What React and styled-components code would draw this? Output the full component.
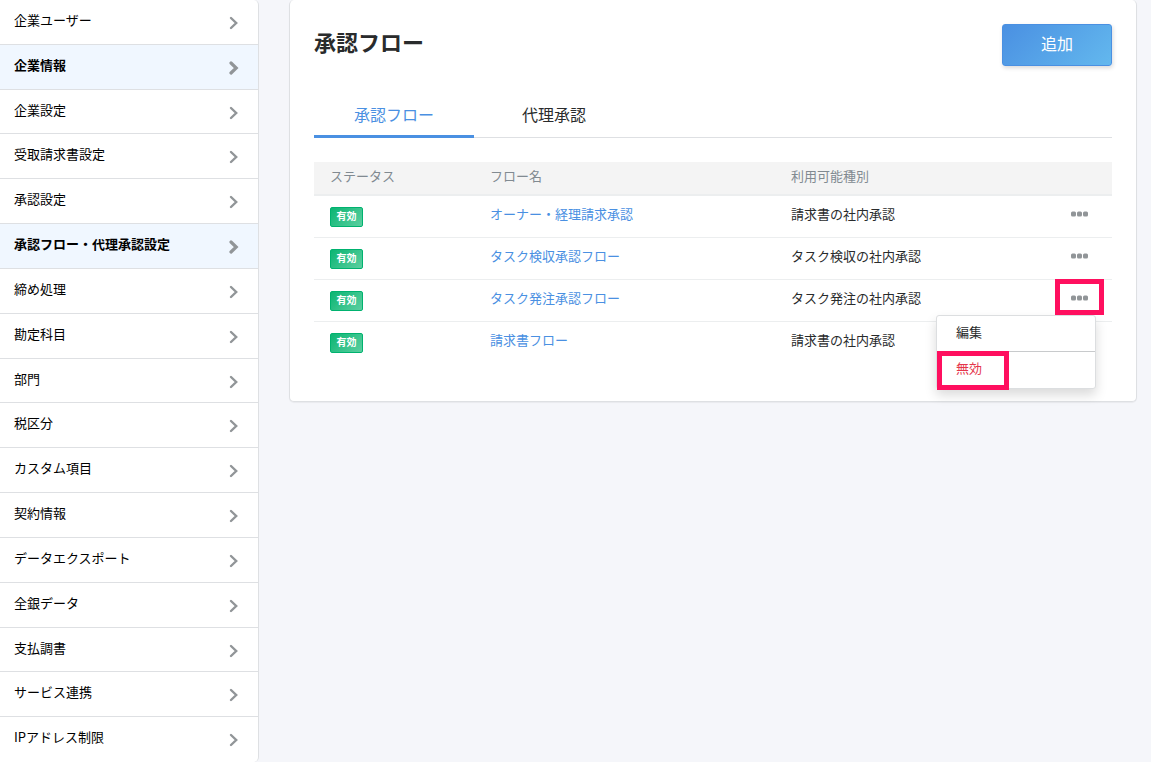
import React from "react";
import styled, { createGlobalStyle, css } from "styled-components";

const GlobalStyle = createGlobalStyle`
  *, *::before, *::after { box-sizing: border-box; }
  body {
    margin: 0;
    background: #f5f6fa;
    color: #292b2c;
    font-family: "Noto Sans CJK JP", "Noto Sans", sans-serif;
    font-size: 13px;
    line-height: 20px;
  }
  button { font-family: inherit; cursor: pointer; }
  a { text-decoration: none; }
`;

const Page = styled.div`
  display: flex;
  align-items: flex-start;
  min-height: 100vh;
`;

const Sidebar = styled.nav`
  flex: none;
  width: 259px;
  background: #fff;
  border-right: 1px solid #dee0e3;
  border-radius: 0 5px 5px 0;
`;

const MenuList = styled.ul`
  display: grid;
  grid-auto-rows: 1fr;
  min-height: 100vh;
  margin: 0;
  padding: 0;
  list-style: none;
`;

const MenuItem = styled.li`
  display: grid;
  border-bottom: 1px solid #dee0e3;
  &:last-child { border-bottom-color: transparent; }
`;

const MenuLink = styled.a`
  display: flex;
  justify-content: space-between;
  padding: 10px 19px 10px 14px;
  color: #000;
  ${(p) => p.$active && css`
    background: #f0f7ff;
    font-weight: 700;
  `}
`;

const Chevron = styled.svg`
  width: 10px;
  height: 14px;
  margin-top: 6px;
  fill: none;
  stroke: #919598;
  stroke-width: ${(p) => (p.$bold ? 3.2 : 2.4)};
  stroke-linecap: round;
`;

const Main = styled.main`
  flex: 1;
  min-width: 0;
  padding: 0 14px 24px 30px;
`;

const Card = styled.section`
  padding: 24px 24px 37px;
  background: #fff;
  border: 1px solid #dee0e3;
  border-top: 0;
  border-radius: 5px;
  box-shadow: 0 1px 1px rgba(0, 0, 0, 0.05);
`;

const CardHeader = styled.header`
  display: flex;
  justify-content: space-between;
  align-items: flex-start;
`;

const Title = styled.h1`
  margin: 0;
  font-size: 22px;
  line-height: 34px;
  font-weight: 700;
`;

const AddButton = styled.button`
  width: 110px;
  height: 42px;
  padding: 0 0 4px;
  border: 1px solid #4a90e2;
  border-radius: 3px;
  background: linear-gradient(135deg, #4a90e2, #63b8ee);
  box-shadow: 1px 2px 4px rgba(0, 0, 0, 0.15);
  color: #fff;
  font-size: 16px;
  line-height: 24px;
`;

const Tabs = styled.div`
  display: flex;
  margin: 28px 0 24px;
  box-shadow: inset 0 -1px #dee0e3;
`;

const Tab = styled.button`
  width: 160px;
  height: 44px;
  padding: 0 0 2px;
  border: 0;
  border-bottom: 3px solid ${(p) => (p.$active ? "#4a90e2" : "transparent")};
  background: none;
  color: ${(p) => (p.$active ? "#4a90e2" : "#292b2c")};
  font-size: 16px;
  line-height: 24px;
`;

const Table = styled.table`
  width: 100%;
  table-layout: fixed;
  border-spacing: 0;
`;

const Col = styled.col`
  width: ${(p) => p.$width || "auto"};
`;

const HeadCell = styled.th`
  height: 34px;
  padding: 4px 16px 8px;
  background: #f4f4f4;
  border-bottom: 2px solid #eceeef;
  color: #818a91;
  font-weight: 400;
  text-align: left;
`;

const Row = styled.tr`
  &:not(:last-child) > td { border-bottom: 1px solid #eceeef; }
`;

const Cell = styled.td`
  height: 42px;
  padding: 8px 16px 0;
  vertical-align: top;
`;

const ActionCell = styled.td`
  padding: 0 8px 0 0;
  vertical-align: top;
`;

const Badge = styled.span`
  display: block;
  width: 33px;
  height: 20px;
  margin-top: 3px;
  border: 1px solid #00b26f;
  border-radius: 2px;
  background: linear-gradient(135deg, #0bb573, #5ccfa0);
  color: #fff;
  font-size: 10px;
  line-height: 16px;
  font-weight: 700;
  text-align: center;
`;

const FlowLink = styled.a`
  color: #4a90e2;
`;

const Actions = styled.div`
  position: relative;
  z-index: ${(p) => (p.$open ? 2 : 0)};
`;

const Highlight = styled.span`
  position: absolute;
  z-index: 1;
  top: -1px;
  left: 0;
  width: ${(p) => p.$width};
  height: ${(p) => p.$height};
  border: 5px solid #ff0f5f;
  pointer-events: none;
`;

const MoreButton = styled.button`
  display: flex;
  align-items: center;
  justify-content: center;
  width: 100%;
  height: 36px;
  padding: 0;
  border: 0;
  background: none;
`;

const Dots = styled.svg`
  width: 17px;
  height: 6px;
  fill: #919598;
`;

const Dropdown = styled.div`
  position: absolute;
  top: 35px;
  right: 8px;
  width: 160px;
  border: 1px solid #dcdee0;
  border-radius: 3px;
  background: #fff;
  box-shadow: 0 6px 12px rgba(0, 0, 0, 0.15);
`;

const DropdownEntry = styled.div`
  position: relative;
  & + & { border-top: 1px solid #c8cacc; }
`;

const DropdownButton = styled.button`
  display: block;
  width: 100%;
  height: 36px;
  padding: 0 19px 4px;
  border: 0;
  background: none;
  color: ${(p) => (p.$danger ? "#e5354b" : "#292b2c")};
  font-size: 13px;
  line-height: 20px;
  text-align: left;
  ${DropdownEntry}:first-child & { height: 35px; }
`;

const menu = [
  { label: "企業ユーザー" },
  { label: "企業情報", active: true },
  { label: "企業設定" },
  { label: "受取請求書設定" },
  { label: "承認設定" },
  { label: "承認フロー・代理承認設定", active: true },
  { label: "締め処理" },
  { label: "勘定科目" },
  { label: "部門" },
  { label: "税区分" },
  { label: "カスタム項目" },
  { label: "契約情報" },
  { label: "データエクスポート" },
  { label: "全銀データ" },
  { label: "支払調書" },
  { label: "サービス連携" },
  { label: "IPアドレス制限" },
];

const flows = [
  { name: "オーナー・経理請求承認", kind: "請求書の社内承認" },
  { name: "タスク検収承認フロー", kind: "タスク検収の社内承認" },
  { name: "タスク発注承認フロー", kind: "タスク発注の社内承認", open: true },
  { name: "請求書フロー", kind: "請求書の社内承認" },
];

function RowActions({ open }) {
  return (
    <Actions $open={open}>
      <MoreButton type="button" aria-label="操作" aria-expanded={!!open}>
        <Dots viewBox="0 0 17 6" aria-hidden="true">
          <rect x="0" y="0.5" width="5" height="5" rx="1.5" />
          <rect x="6" y="0.5" width="5" height="5" rx="1.5" />
          <rect x="12" y="0.5" width="5" height="5" rx="1.5" />
        </Dots>
      </MoreButton>
      {open && (
        <>
          <Highlight $width="49px" $height="36px" />
          <Dropdown>
            <DropdownEntry>
              <DropdownButton type="button">編集</DropdownButton>
            </DropdownEntry>
            <DropdownEntry>
              <DropdownButton type="button" $danger>無効</DropdownButton>
              <Highlight $width="72px" $height="39px" />
            </DropdownEntry>
          </Dropdown>
        </>
      )}
    </Actions>
  );
}

export default function App() {
  return (
    <>
      <GlobalStyle />
      <Page>
        <Sidebar>
          <MenuList>
            {menu.map((item) => (
              <MenuItem key={item.label}>
                <MenuLink href="#" $active={item.active}>
                  {item.label}
                  <Chevron viewBox="0 0 10 14" $bold={item.active} aria-hidden="true">
                    <path d="M2 2 7.200 7 2 12" />
                  </Chevron>
                </MenuLink>
              </MenuItem>
            ))}
          </MenuList>
        </Sidebar>
        <Main>
          <Card>
            <CardHeader>
              <Title>承認フロー</Title>
              <AddButton type="button">追加</AddButton>
            </CardHeader>
            <Tabs role="tablist">
              <Tab type="button" role="tab" aria-selected="true" $active>承認フロー</Tab>
              <Tab type="button" role="tab" aria-selected="false">代理承認</Tab>
            </Tabs>
            <Table>
              <colgroup>
                <Col $width="160px" />
                <Col $width="301px" />
                <Col />
                <Col $width="57px" />
              </colgroup>
              <thead>
                <tr>
                  <HeadCell scope="col">ステータス</HeadCell>
                  <HeadCell scope="col">フロー名</HeadCell>
                  <HeadCell scope="col">利用可能種別</HeadCell>
                  <HeadCell />
                </tr>
              </thead>
              <tbody>
                {flows.map((flow) => (
                  <Row key={flow.name}>
                    <Cell><Badge>有効</Badge></Cell>
                    <Cell><FlowLink href="#">{flow.name}</FlowLink></Cell>
                    <Cell>{flow.kind}</Cell>
                    <ActionCell><RowActions open={flow.open} /></ActionCell>
                  </Row>
                ))}
              </tbody>
            </Table>
          </Card>
        </Main>
      </Page>
    </>
  );
}
